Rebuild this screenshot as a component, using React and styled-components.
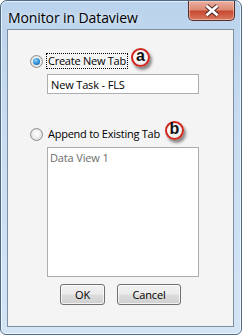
import styled, { createGlobalStyle } from 'styled-components'

const GlobalStyle = createGlobalStyle`
  html, body {
    margin: 0;
    background: #ffffff;
  }
`

const Window = styled.div`
  box-sizing: border-box;
  width: 242px;
  height: 335px;
  display: flex;
  flex-direction: column;
  padding: 0 7px 7px 6px;
  border: 1px solid #4d6a86;
  border-radius: 7px 7px 6px 6px;
  background: linear-gradient(180deg, #bad3ec 0%, #c9ddf2 40%, #d3e4f5 100%);
  box-shadow: inset 0 0 0 1px rgba(255, 255, 255, 0.65);
  font-family: 'Open Sans', 'Noto Sans', sans-serif;
`

const TitleBar = styled.div`
  display: flex;
  align-items: flex-start;
  justify-content: space-between;
  height: 28px;
`

const Title = styled.span`
  padding: 7px 0 0 1px;
  font-size: 14px;
  letter-spacing: -0.1px;
  color: #000000;
  text-shadow: 0 0 6px rgba(255, 255, 255, 0.9);
`

const CloseButton = styled.div`
  box-sizing: border-box;
  width: 47px;
  height: 20px;
  margin-right: -1px;
  display: flex;
  align-items: center;
  justify-content: center;
  border: 1px solid #5a2e28;
  border-top: none;
  border-radius: 0 0 5px 5px;
  background: linear-gradient(180deg, #eab0a2 0%, #dd8a74 45%, #c84a32 55%, #d87a60 100%);
  box-shadow: inset 0 0 0 1px rgba(255, 220, 210, 0.5);
`

const Client = styled.div`
  flex: 1;
  display: flex;
  flex-direction: column;
  border: 1px solid #7d8fa1;
  background: #f4f4f4;
  padding: 23px 0 0 22px;
`

const OptionRow = styled.div`
  display: flex;
  align-items: center;
  height: 16px;
  margin-top: ${(p) => p.$gap || 0}px;
`

const Radio = styled.span`
  box-sizing: border-box;
  width: 13px;
  height: 13px;
  margin-right: 3px;
  border-radius: 50%;
  border: 1px solid #8e8f8f;
  background: radial-gradient(circle at 50% 40%, #ffffff 0%, #ececec 55%, #d2d2d2 100%);
  box-shadow: inset 0 0 0 1px #e2e2e2;
  display: flex;
  align-items: center;
  justify-content: center;

  &::after {
    content: '';
    display: ${(p) => (p.$checked ? 'block' : 'none')};
    width: 7px;
    height: 7px;
    border-radius: 50%;
    background: radial-gradient(circle at 40% 35%, #8fd5f7 0%, #2a8ad4 55%, #0b4d92 100%);
  }
`

const Label = styled.span`
  font-size: 11px;
  letter-spacing: -0.25px;
  line-height: 14px;
  padding: 0 1px;
  color: #000000;
  border: 1px dotted ${(p) => (p.$focused ? '#000000' : 'transparent')};
`

const Badge = styled.span`
  box-sizing: border-box;
  width: 19px;
  height: 19px;
  margin-left: 3px;
  transform: translateY(-4px);
  border-radius: 50%;
  border: 2px solid #d0261d;
  background: radial-gradient(circle at 40% 35%, #ffffff 0%, #f2f2f2 60%, #d9d9d9 100%);
  box-shadow: 2px 3px 3px rgba(0, 0, 0, 0.45);
  display: flex;
  align-items: center;
  justify-content: center;
  font-family: 'Liberation Sans', Arial, sans-serif;
  font-size: 16px;
  font-weight: bold;
  line-height: 1;
  color: #111111;
  padding-bottom: 2px;
`

const Field = styled.div`
  box-sizing: border-box;
  width: 152px;
  margin-left: 17px;
  border: 1px solid #abadb3;
  background: #ffffff;
  font-size: 11px;
  letter-spacing: -0.15px;
  color: ${(p) => p.$color || '#000000'};
  padding: ${(p) => (p.$list ? '2px 2px' : '2px 3px')};
  height: ${(p) => p.$height}px;
  margin-top: ${(p) => p.$gap}px;
`

const ButtonRow = styled.div`
  display: flex;
  gap: 12px;
  margin: 7px 0 0 30px;
`

const Button = styled.div`
  box-sizing: border-box;
  width: ${(p) => p.$width}px;
  height: 21px;
  display: flex;
  align-items: center;
  justify-content: center;
  border: 1px solid #707070;
  border-radius: 3px;
  background: linear-gradient(180deg, #f2f2f2 0%, #ebebeb 48%, #dddddd 52%, #cfcfcf 100%);
  box-shadow: inset 0 0 0 1px rgba(255, 255, 255, 0.7);
  font-size: 11px;
  letter-spacing: -0.15px;
  color: #000000;
`

function CloseIcon() {
  return (
    <svg width="16" height="13" viewBox="0 0 16 13">
      <path
        d="M2.5 1.8 L8 6.5 L13.5 1.8 M2.5 11.2 L8 6.5 L13.5 11.2"
        stroke="#4a2a26"
        strokeWidth="4.6"
        fill="none"
      />
      <path
        d="M2.5 1.8 L8 6.5 L13.5 1.8 M2.5 11.2 L8 6.5 L13.5 11.2"
        stroke="#ffffff"
        strokeWidth="2.8"
        fill="none"
      />
    </svg>
  )
}

export default function App() {
  return (
    <>
      <GlobalStyle />
      <Window>
        <TitleBar>
          <Title>Monitor in Dataview</Title>
          <CloseButton>
            <CloseIcon />
          </CloseButton>
        </TitleBar>
        <Client>
          <OptionRow>
            <Radio $checked />
            <Label $focused>Create New Tab</Label>
            <Badge>a</Badge>
          </OptionRow>
          <Field $height={20} $gap={5}>New Task - FLS</Field>
          <OptionRow $gap={32}>
            <Radio />
            <Label>Append to Existing Tab</Label>
            <Badge>b</Badge>
          </OptionRow>
          <Field $list $height={130} $gap={5} $color="#6d6d6d">
            Data View 1
          </Field>
          <ButtonRow>
            <Button $width={45}>OK</Button>
            <Button $width={64}>Cancel</Button>
          </ButtonRow>
        </Client>
      </Window>
    </>
  )
}
